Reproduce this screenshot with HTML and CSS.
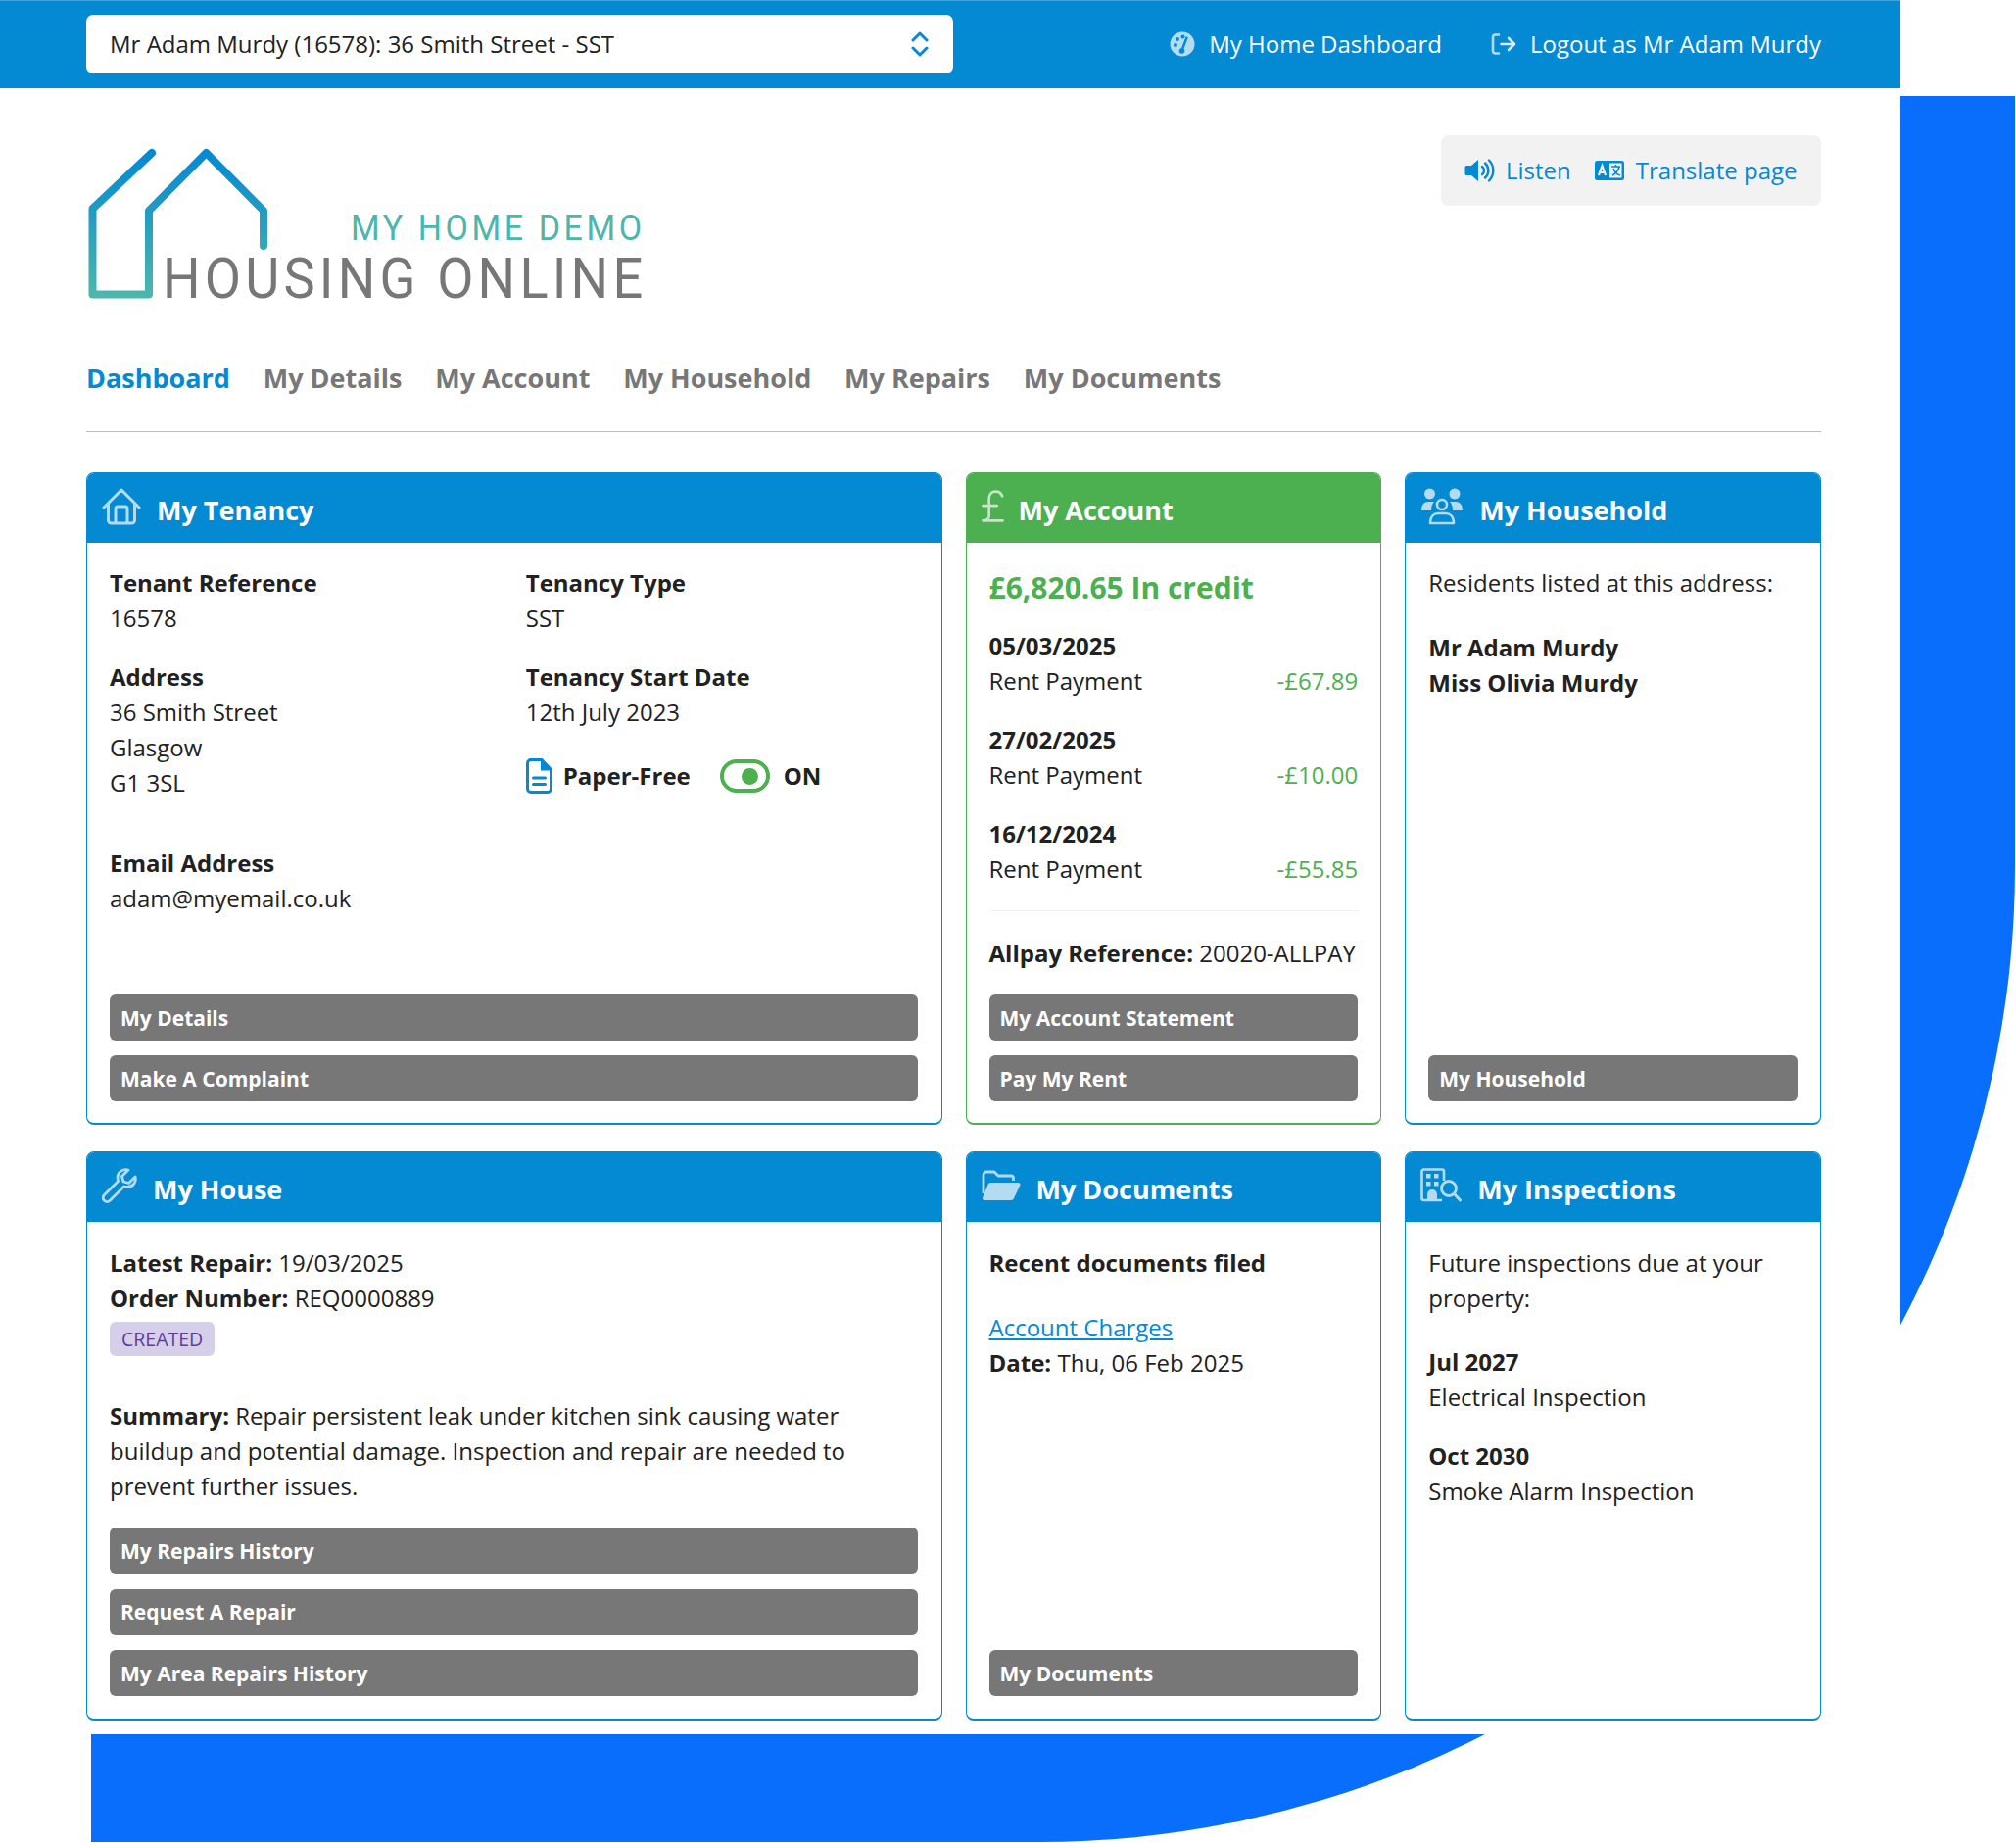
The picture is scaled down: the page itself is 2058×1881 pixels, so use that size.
FILE: index.html
```html
<!DOCTYPE html>
<html lang="en">
<head>
<meta charset="utf-8">
<title>My Home Dashboard</title>
<link rel="stylesheet" href="styles.css">
</head>
<body>
<div class="backdrop"></div>
<div class="page">
  <header class="topbar">
    <div class="select">
      <span>Mr Adam Murdy (16578): 36 Smith Street - SST</span>
      <svg class="chev" viewBox="0 0 20 26" width="20" height="26"><path d="M3 9l7-7 7 7M3 17l7 7 7-7" fill="none" stroke="#0489d3" stroke-width="3" stroke-linecap="round" stroke-linejoin="round"/></svg>
    </div>
    <nav class="toplinks">
      <a class="toplink"><svg viewBox="0 0 26 26" width="26" height="26"><circle cx="13" cy="13" r="12.5" fill="#b3dcf2"/><circle cx="6" cy="14" r="2" fill="#0489d3"/><circle cx="8" cy="8" r="2" fill="#0489d3"/><circle cx="13.5" cy="5.5" r="2" fill="#0489d3"/><path d="M12.5 19.5L17.5 6.5" stroke="#0489d3" stroke-width="2.4" stroke-linecap="round"/><circle cx="12.5" cy="20" r="2.8" fill="#0489d3"/></svg>My Home Dashboard</a>
      <a class="toplink"><svg viewBox="0 0 26 24" width="26" height="24"><path d="M8 2.5H4.5A2.5 2.5 0 0 0 2 5v14a2.5 2.5 0 0 0 2.5 2.5H8" fill="none" stroke="#b3dcf2" stroke-width="2.6" stroke-linecap="round"/><path d="M10.5 12H23.5M18 6l6 6-6 6" fill="none" stroke="#d7edf9" stroke-width="2.6" stroke-linecap="round" stroke-linejoin="round"/></svg>Logout as Mr Adam Murdy</a>
    </nav>
  </header>

  <main class="main">
    <div class="brand">
      <svg class="logo" viewBox="0 0 572 160" width="572" height="160">
        <defs><linearGradient id="lg" gradientUnits="userSpaceOnUse" x1="0" y1="10" x2="0" y2="155"><stop offset="0" stop-color="#0489d3"/><stop offset="1" stop-color="#4db6ac"/></linearGradient></defs>
        <path d="M67 10L6.5 67V154.5H64V69L122.5 10L181 69V105" fill="none" stroke="url(#lg)" stroke-width="8" stroke-linecap="round" stroke-linejoin="round"/>
        <text class="logo-sub" transform="translate(270 99) scale(.92 1)" textLength="323" lengthAdjust="spacing">MY HOME DEMO</text>
        <text class="logo-main" transform="translate(78 158) scale(.95 1)" textLength="516" lengthAdjust="spacing">HOUSING ONLINE</text>
      </svg>
      <div class="tools">
        <a class="tool"><svg viewBox="0 0 32 26" width="32" height="26"><path d="M14 2v22l-7-6H2a1.5 1.5 0 0 1-1.5-1.5v-7A1.5 1.5 0 0 1 2 8h5z" fill="#0489d3"/><path d="M18 9a5 5 0 0 1 0 8M21 5.500a10 10 0 0 1 0 15M25 2.500a15 15 0 0 1 0 21" fill="none" stroke="#0489d3" stroke-width="2.400" stroke-linecap="round"/></svg>Listen</a>
        <a class="tool"><svg viewBox="0 0 30 20" width="30" height="20"><rect width="30" height="20" rx="2.5" fill="#0489d3"/><rect x="15" y="2.5" width="12.5" height="15" fill="#f2f2f2"/><path d="M4 15l3.5-10L11 15M5.2 12h4.6" fill="none" stroke="#f2f2f2" stroke-width="2.2"/><path d="M17 6h9M21.5 4v2M25 6c-1 4-3 7-7 9M19 8c1 3 3 6 7 7" fill="none" stroke="#0489d3" stroke-width="1.6"/></svg>Translate page</a>
      </div>
    </div>

    <nav class="tabs">
      <a class="tab tab-active">Dashboard</a>
      <a class="tab">My Details</a>
      <a class="tab">My Account</a>
      <a class="tab">My Household</a>
      <a class="tab">My Repairs</a>
      <a class="tab">My Documents</a>
    </nav>

    <div class="cards">
      <section class="card wide card-upper">
        <h2 class="card-head"><svg viewBox="0 0 40 38" width="40" height="38"><path d="M2 20L20 2l18 18M6.5 16v17a3 3 0 0 0 3 3h21a3 3 0 0 0 3-3V16M14 36V21a2 2 0 0 1 2-2h8a2 2 0 0 1 2 2v15" fill="none" stroke="#b3dcf2" stroke-width="3" stroke-linecap="round" stroke-linejoin="round"/></svg>My Tenancy</h2>
        <div class="card-body">
          <div class="two">
            <div>
              <b>Tenant Reference</b><p>16578</p>
              <b class="next">Address</b><p>36 Smith Street</p><p>Glasgow</p><p>G1 3SL</p>
            </div>
            <div>
              <b>Tenancy Type</b><p>SST</p>
              <b class="next">Tenancy Start Date</b><p>12th July 2023</p>
              <div class="paper">
                <svg viewBox="0 0 27 36" width="27" height="36"><path d="M3.5 1.5H16l9.5 10V31a3.5 3.5 0 0 1-3.5 3.5H5A3.5 3.5 0 0 1 1.5 31V5a3.5 3.5 0 0 1 3.5-3.5z" fill="none" stroke="#0489d3" stroke-width="3"/><path d="M16 2v9.500h9" fill="#0489d3" stroke="#0489d3" stroke-width="2"/><path d="M7.5 20h12M7.5 26.5h12" stroke="#0489d3" stroke-width="3" stroke-linecap="round"/></svg>
                <b class="paper-label">Paper-Free</b>
                <span class="toggle"><i></i></span>
                <b>ON</b>
              </div>
            </div>
          </div>
          <div class="email"><b>Email Address</b><p>adam@myemail.co.uk</p></div>
          <div class="actions"><a class="btn">My Details</a><a class="btn">Make A Complaint</a></div>
        </div>
      </section>

      <section class="card green card-upper">
        <h2 class="card-head"><svg class="pound" viewBox="0 0 24 36" width="23" height="36"><path d="M22 7C21 3.5 18 2 15 2 10.5 2 8 5 8 9.5V28M1.5 17h15M1.5 33h21M8 28c0 2.5-2 5-6.5 5" fill="none" stroke="#c4e5c6" stroke-width="2.8" stroke-linecap="round"/></svg>My Account</h2>
        <div class="card-body">
          <h3 class="credit">£6,820.65 In credit</h3>
          <div class="tx"><b>05/03/2025</b><div class="tx-row"><span>Rent Payment</span><span class="amt">-£67.89</span></div></div>
          <div class="tx"><b>27/02/2025</b><div class="tx-row"><span>Rent Payment</span><span class="amt">-£10.00</span></div></div>
          <div class="tx"><b>16/12/2024</b><div class="tx-row"><span>Rent Payment</span><span class="amt">-£55.85</span></div></div>
          <hr class="rule">
          <p><b>Allpay Reference:</b> 20020-ALLPAY</p>
          <div class="actions"><a class="btn">My Account Statement</a><a class="btn">Pay My Rent</a></div>
        </div>
      </section>

      <section class="card card-upper">
        <h2 class="card-head"><svg viewBox="0 0 44 38" width="44" height="38"><g fill="#b3dcf2"><circle cx="9.5" cy="6" r="5.5"/><circle cx="35" cy="6" r="5.5"/><path d="M1 23c0-6 3-9 7-9h6c-2 2-3 5-3 9zM43 23c0-6-3-9-7-9h-6c2 2 3 5 3 9z"/></g><circle cx="22" cy="17" r="5" fill="none" stroke="#b3dcf2" stroke-width="2.6"/><path d="M10 36c0-7 4-10 8-10h8c4 0 8 3 8 10z" fill="none" stroke="#b3dcf2" stroke-width="2.6" stroke-linejoin="round"/></svg>My Household</h2>
        <div class="card-body">
          <p>Residents listed at this address:</p>
          <div class="residents"><b>Mr Adam Murdy</b><b>Miss Olivia Murdy</b></div>
          <div class="actions"><a class="btn">My Household</a></div>
        </div>
      </section>

      <section class="card wide card-lower">
        <h2 class="card-head"><svg viewBox="0 0 36 36" width="36" height="36"><path d="M34 9l-6.5 6.5L22 14l-1.5-5.500L27 2c-5-1.5-11 2-11 8 0 1.5.3 2.5.6 3.500L2.500 27.500c-1.800 1.800-1.800 4 0 5.700 1.700 1.800 3.900 1.800 5.700 0L22.500 19c1 .3 2 .5 3.500.5 6 0 9.500-5.500 8-10.500z" fill="none" stroke="#b3dcf2" stroke-width="2.8" stroke-linejoin="round"/></svg>My House</h2>
        <div class="card-body">
          <p><b>Latest Repair:</b> 19/03/2025</p>
          <p><b>Order Number:</b> REQ0000889</p>
          <span class="badge">CREATED</span>
          <p class="summary"><b>Summary:</b> Repair persistent leak under kitchen sink causing water buildup and potential damage. Inspection and repair are needed to prevent further issues.</p>
          <div class="actions"><a class="btn">My Repairs History</a><a class="btn">Request A Repair</a><a class="btn">My Area Repairs History</a></div>
        </div>
      </section>

      <section class="card card-lower">
        <h2 class="card-head"><svg viewBox="0 0 40 32" width="40" height="32"><path d="M2 24V5a3 3 0 0 1 3-3h8l4 4h13a2.5 2.5 0 0 1 2.5 2.5V11" fill="none" stroke="#b3dcf2" stroke-width="2.8" stroke-linejoin="round"/><path d="M9 13h28.500c1.500 0 2.500 1.300 1.800 2.700L33 29c-.5 1-1.300 2-3 2H3c-1.500 0-2.500-1.500-1.800-3L6.500 15c.5-1.200 1.300-2 2.500-2z" fill="#b3dcf2"/></svg>My Documents</h2>
        <div class="card-body">
          <b>Recent documents filed</b>
          <a class="doc-link">Account Charges</a>
          <p><b>Date:</b> Thu, 06 Feb 2025</p>
          <div class="actions"><a class="btn">My Documents</a></div>
        </div>
      </section>

      <section class="card card-lower">
        <h2 class="card-head"><svg viewBox="0 0 42 36" width="42" height="36"><path d="M24 13V3.5A2 2 0 0 0 22 1.5H3.5a2 2 0 0 0-2 2V31a2 2 0 0 0 2 2H22" fill="none" stroke="#b3dcf2" stroke-width="2.6"/><g fill="#b3dcf2"><rect x="6" y="6" width="4.5" height="4.5"/><rect x="14" y="6" width="4.5" height="4.5"/><rect x="6" y="14" width="4.5" height="4.5"/><rect x="14" y="14" width="4.5" height="4.5"/><path d="M7 32v-5a5 5 0 0 1 10 0v5z"/></g><circle cx="29" cy="21" r="7.5" fill="none" stroke="#b3dcf2" stroke-width="2.8"/><path d="M34.5 26.5l6 6.5" stroke="#b3dcf2" stroke-width="3" stroke-linecap="round"/></svg>My Inspections</h2>
        <div class="card-body">
          <p>Future inspections due at your property:</p>
          <b class="insp-first">Jul 2027</b><p>Electrical Inspection</p>
          <b class="insp-next">Oct 2030</b><p>Smoke Alarm Inspection</p>
        </div>
      </section>
    </div>
  </main>
</div>
</body>
</html>
```

FILE: styles.css
```css
* { box-sizing: border-box; }
html, body { margin: 0; padding: 0; }
body {
  position: relative;
  height: 1881px;
  overflow: hidden;
  background: #fff;
  color: #212121;
  font: 400 24px/36px "Open Sans", "Liberation Sans", sans-serif;
}
p { margin: 0; }
b { display: block; font-weight: 700; }
p b { display: inline; }

.backdrop {
  position: absolute;
  left: 93px;
  top: 98px;
  right: 1px;
  bottom: 1px;
  background: #0a6efd;
  border-bottom-right-radius: 996px;
}
.page { position: relative; width: 1940px; }

.topbar {
  height: 90px;
  padding: 15px 81px 15px 88px;
  background: #0489d3;
  box-shadow: inset 0 1px 0 #3fa3dd;
  display: flex;
  align-items: center;
  justify-content: space-between;
}
.select {
  width: 885px;
  height: 60px;
  padding: 0 24px;
  background: #fff;
  border-radius: 7px;
  display: flex;
  align-items: center;
  justify-content: space-between;
}
.toplinks { display: flex; gap: 50px; }
.toplink { display: flex; align-items: center; gap: 14px; color: #fff; }

.main {
  height: 1680px;
  padding: 0 81px 0 88px;
  background: #fff;
}
.brand {
  display: flex;
  justify-content: space-between;
  align-items: flex-start;
  padding-top: 48px;
  height: 250px;
}
.logo { display: block; margin-top: 8px; overflow: visible; }
.logo-sub { font: 400 37px "Roboto", sans-serif; fill: #4db6ac; }
.logo-main { font: 400 57px "Roboto", sans-serif; fill: #777; }
.tools {
  width: 388px;
  height: 72px;
  padding: 0 24px;
  background: #f2f2f2;
  border-radius: 8px;
  display: flex;
  align-items: center;
  gap: 24px;
}
.tool { display: flex; align-items: center; gap: 10px; color: #0489d3; white-space: nowrap; }
.tool + .tool { gap: 12px; }

.tabs {
  display: flex;
  gap: 33.8px;
  height: 101px;
  padding-top: 26px;
  border-bottom: 1px solid #bbb;
  font-size: 27px;
  line-height: 40px;
  font-weight: 700;
  color: #777;
}
.tab-active { color: #0489d3; }

.cards {
  display: grid;
  grid-template-columns: repeat(4, 1fr);
  gap: 27px 24px;
  margin-top: 41px;
}
.wide { grid-column: span 2; }
.card {
  --accent: #0489d3;
  display: flex;
  flex-direction: column;
  border: 1px solid var(--accent);
  border-bottom-width: 2px;
  border-radius: 8px;
  overflow: hidden;
  background: #fff;
}
.green { --accent: #4cb050; }
.card-head {
  height: 72px;
  margin: -1px -1px 0;
  padding: 4px 16px 0;
  flex: none;
  display: flex;
  align-items: center;
  gap: 16px;
  background: var(--accent);
  color: #fff;
  font-size: 27px;
  font-weight: 700;
  line-height: 1;
}
.card-head svg { margin-bottom: 6px; }
.card-head .pound { margin-right: -1px; }
.card-body {
  flex: 1;
  padding: 24px 23px 22px;
  display: flex;
  flex-direction: column;
}
.wide .card-body { padding-right: 24px; }
.card-upper .card-body { padding-top: 23px; }
.card-lower .card-body { padding-bottom: 23px; }
.card-lower .actions { gap: 15.5px; }
.actions {
  margin-top: auto;
  padding-top: 24px;
  display: flex;
  flex-direction: column;
  gap: 15px;
}
.btn {
  height: 47px;
  padding: 0 11px;
  display: flex;
  align-items: center;
  background: #777;
  border-radius: 6px;
  color: #fff;
  font-size: 21px;
  font-weight: 700;
}
.two { display: grid; grid-template-columns: 1fr 1fr; column-gap: 25px; }
.next { margin-top: 24px; }
.paper { display: flex; align-items: center; margin-top: 29px; }
.paper-label { margin: 0 30px 0 11px; }
.toggle {
  width: 51px;
  height: 34px;
  margin-right: 14px;
  padding-right: 8px;
  border: 4px solid #4cb050;
  border-radius: 17px;
  display: flex;
  align-items: center;
  justify-content: flex-end;
}
.toggle i { width: 17px; height: 17px; border-radius: 50%; background: #4cb050; }
.email { margin-top: 46px; }

.credit { margin: 0 0 19px; color: #4cb050; font-size: 30px; line-height: 45px; font-weight: 700; }
.tx + .tx { margin-top: 24px; }
.tx-row { display: flex; justify-content: space-between; }
.amt { color: #4cb050; }
.rule { width: 100%; margin: 24px 0 25px; border: 0; border-top: 1px solid #eee; }
.residents { margin-top: 30px; }
.badge {
  align-self: flex-start;
  margin-top: 6px;
  padding: 0 12px;
  height: 35px;
  background: #d6cfe9;
  border-radius: 6px;
  color: #5a3d9a;
  font-size: 19.5px;
  line-height: 35px;
}
.summary { margin-top: 43px; }
.doc-link { margin-top: 30px; color: #0489d3; text-decoration: underline; }
.insp-first { margin-top: 29px; }
.insp-next { margin-top: 24px; }
```
